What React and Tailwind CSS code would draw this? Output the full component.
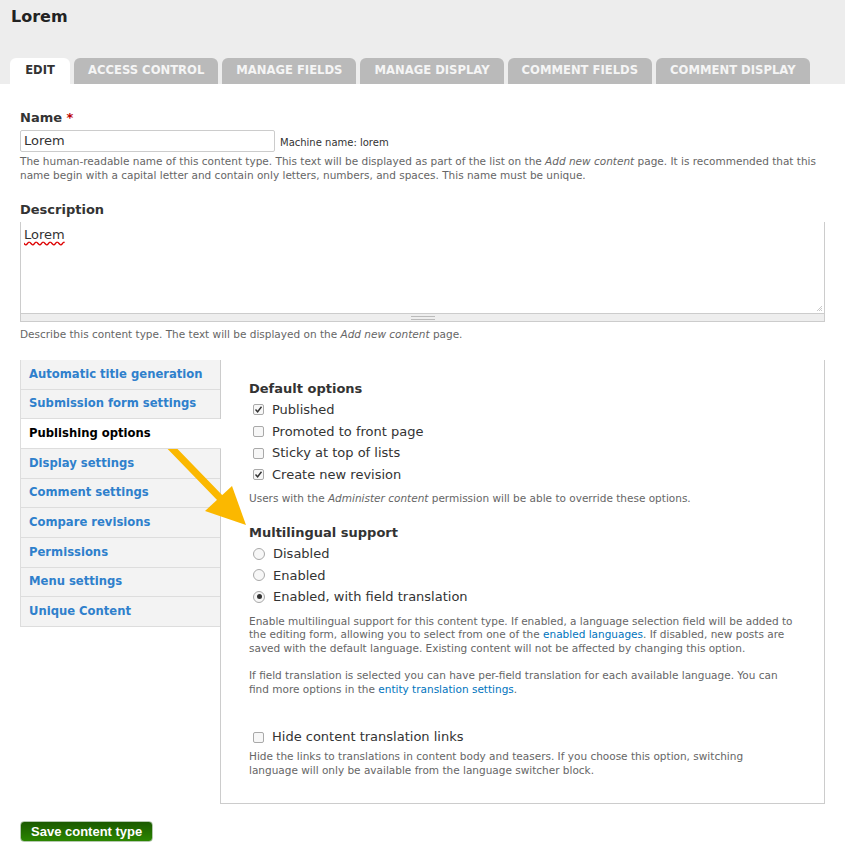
const tabs = ['ACCESS CONTROL', 'MANAGE FIELDS', 'MANAGE DISPLAY', 'COMMENT FIELDS', 'COMMENT DISPLAY'];

const menu = [
  'Automatic title generation',
  'Submission form settings',
  'Publishing options',
  'Display settings',
  'Comment settings',
  'Compare revisions',
  'Permissions',
  'Menu settings',
  'Unique Content',
];

function Check({ checked }) {
  return (
    <span className="w-[11px] h-[11px] border border-[#a9a9a9] rounded-[2px] bg-[#f7f7f7] flex items-center justify-center shrink-0">
      {checked && (
        <svg width="9" height="9" viewBox="0 0 9 9">
          <path d="M1.5 4.5 L3.6 6.8 L7.5 1.8" fill="none" stroke="#333" strokeWidth="1.4" />
        </svg>
      )}
    </span>
  );
}

function Radio({ checked }) {
  return (
    <span className="w-[12px] h-[12px] border border-[#a9a9a9] rounded-full bg-[#f7f7f7] flex items-center justify-center shrink-0">
      {checked && <span className="w-[5px] h-[5px] rounded-full bg-[#333]" />}
    </span>
  );
}

function Option({ children, type, checked }) {
  return (
    <div className="flex items-center h-[21.7px] pl-[4px] gap-[8px] text-[13px] text-[#333]">
      {type === 'radio' ? <Radio checked={checked} /> : <Check checked={checked} />}
      <span>{children}</span>
    </div>
  );
}

export default function App() {
  return (
    <div className="relative w-[845px] min-h-[853px] bg-white text-[#333]" style={{ fontFamily: '"DejaVu Sans", sans-serif' }}>
      <div className="h-[84px] bg-[#ededed] flex flex-col">
        <h1 className="text-[16px] font-bold leading-[20px] pt-[7px] pl-[11px] text-[#222]">Lorem</h1>
        <div className="mt-auto flex gap-[4px] pl-[10px] h-[26px]">
          <div className="bg-white rounded-t-[6px] w-[60px] flex items-center justify-center text-[11.5px] font-bold text-[#333]">EDIT</div>
          {tabs.map((t) => (
            <div key={t} className="bg-[#bababa] rounded-t-[6px] px-[14px] flex items-center text-[11.6px] font-bold text-[#f5f5f5]">
              {t}
            </div>
          ))}
        </div>
      </div>

      <div className="px-[20px]">
        <div className="mt-[25px] text-[13px] font-bold leading-[18px]">
          Name <span className="text-[#b00]">*</span>
        </div>
        <div className="mt-[3px] flex items-end gap-[5px]">
          <div className="w-[255px] h-[22px] border border-[#ccc] rounded-[2px] px-[3px] text-[13px] leading-[20px]">Lorem</div>
          <span className="text-[10px] leading-[14px] pb-[2px]">Machine name: lorem</span>
        </div>
        <p className="mt-[2px] text-[10.5px] leading-[14px] text-[#666] w-[805px]">
          The human-readable name of this content type. This text will be displayed as part of the list on the <em>Add new content</em> page. It is recommended that this name begin with a capital letter and contain only letters, numbers, and spaces. This name must be unique.
        </p>

        <div className="mt-[19px] text-[13px] font-bold leading-[18px]">Description</div>
        <div className="mt-[3px] w-[805px]">
          <div className="relative h-[91px] border-x border-[#ccc] px-[3px] pt-[5px] text-[13px] leading-[16px]">
            <span className="underline decoration-wavy decoration-[#d00] underline-offset-[2px]">Lorem</span>
            <svg className="absolute right-[1px] bottom-[1px]" width="7" height="7" viewBox="0 0 7 7">
              <path d="M6 1 L1 6 M6 3 L3 6 M6 5 L5 6" stroke="#bbb" strokeWidth="0.8" />
            </svg>
          </div>
          <div className="h-[9px] bg-[#eee] border border-[#ccc] flex flex-col items-center justify-center gap-[2px]">
            <span className="w-[24px] h-px bg-[#bbb]" />
            <span className="w-[24px] h-px bg-[#bbb]" />
          </div>
        </div>
        <p className="mt-[5px] text-[10.5px] leading-[14px] text-[#666]">
          Describe this content type. The text will be displayed on the <em>Add new content</em> page.
        </p>

        <div className="mt-[19px] flex w-[805px]">
          <div className="w-[200px] self-start border-l border-[#ddd]">
            {menu.map((m) => {
              const active = m === 'Publishing options';
              return (
                <div
                  key={m}
                  className={
                    active
                      ? 'relative z-10 h-[29.67px] -mr-px bg-white border-b border-[#ddd] pl-[8px] flex items-center text-[11.6px] font-bold text-black'
                      : 'h-[29.67px] bg-[#f3f3f3] border-b border-[#ddd] pl-[8px] flex items-center text-[11.6px] font-bold text-[#2f80cc]'
                  }
                >
                  {m}
                </div>
              );
            })}
          </div>
          <div className="flex-1 h-[444px] border-l border-r border-b border-[#ccc] pl-[28px] pr-[30px] pt-[20px]">
            <div className="text-[13px] font-bold leading-[18px]">Default options</div>
            <div className="mt-[1px]">
              <Option checked>Published</Option>
              <Option>Promoted to front page</Option>
              <Option>Sticky at top of lists</Option>
              <Option checked>Create new revision</Option>
            </div>
            <p className="mt-[5px] text-[10.5px] leading-[14px] text-[#666]">
              Users with the <em>Administer content</em> permission will be able to override these options.
            </p>
            <div className="mt-[19px] text-[13px] font-bold leading-[18px]">Multilingual support</div>
            <div className="mt-[1px]">
              <Option type="radio">Disabled</Option>
              <Option type="radio">Enabled</Option>
              <Option type="radio" checked>Enabled, with field translation</Option>
            </div>
            <p className="mt-[7px] text-[10.5px] leading-[13.5px] text-[#666]">
              Enable multilingual support for this content type. If enabled, a language selection field will be added to the editing form, allowing you to select from one of the <span className="text-[#0074bd]">enabled languages</span>. If disabled, new posts are saved with the default language. Existing content will not be affected by changing this option.
            </p>
            <p className="mt-[13px] text-[10.5px] leading-[14px] text-[#666]">
              If field translation is selected you can have per-field translation for each available language. You can find more options in the <span className="text-[#0074bd]">entity translation settings</span>.
            </p>
            <div className="mt-[30px]">
              <Option>Hide content translation links</Option>
            </div>
            <p className="mt-[2px] text-[10.5px] leading-[13.5px] text-[#666]">
              Hide the links to translations in content body and teasers. If you choose this option, switching language will only be available from the language switcher block.
            </p>
          </div>
        </div>

        <button
          className="mt-[17px] h-[21px] px-[10px] rounded-[4px] border border-[#b5c9b0] bg-gradient-to-b from-[#1b5a00] to-[#2b8600] text-white text-[13px] font-bold leading-[19px]"
          style={{ fontFamily: '"Liberation Sans", Arial, sans-serif' }}
        >
          Save content type
        </button>
      </div>

      <svg className="absolute left-0 top-0 pointer-events-none" width="845" height="853">
        <line x1="161" y1="437" x2="222" y2="500" stroke="#fbb800" strokeWidth="7" strokeLinecap="round" />
        <polygon points="246,525 205,511 232,486" fill="#fbb800" />
      </svg>
    </div>
  );
}
